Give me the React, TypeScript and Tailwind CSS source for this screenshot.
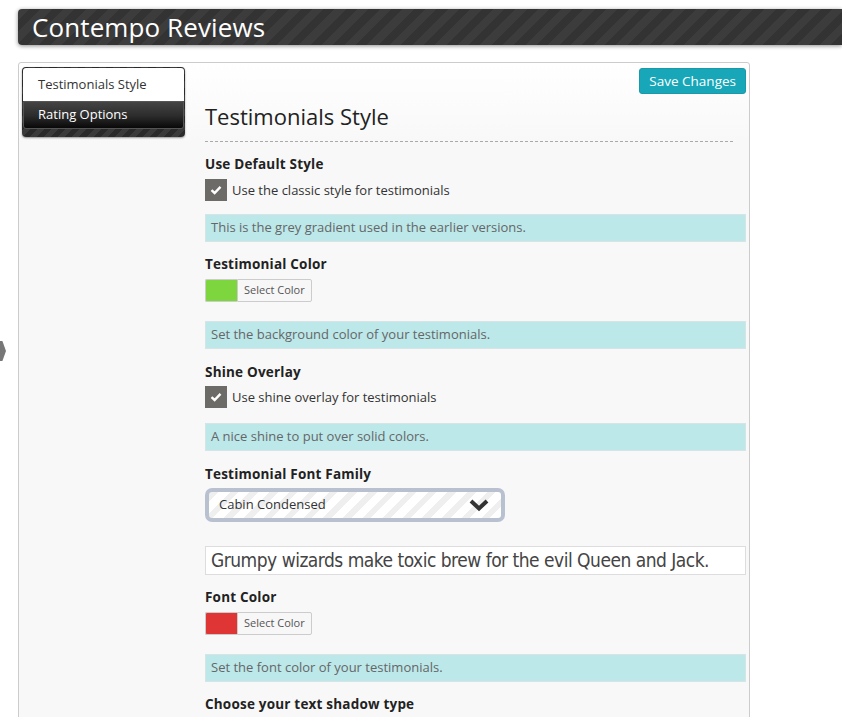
const stripes =
  "bg-[repeating-linear-gradient(-45deg,#333_0px,#333_8px,#3c3c3c_8px,#3c3c3c_16px)]";

function Checkbox({ label, className = "" }: { label: string; className?: string }) {
  return (
    <div className={"flex items-center gap-[5px] " + className}>
      <span className="w-[22px] h-[22px] bg-[#6d6b68] flex items-center justify-center">
        <svg width="12" height="10" viewBox="0 0 12 10">
          <path d="M1.5 5.2 L4.6 8 L10.5 1.8" fill="none" stroke="#fff" strokeWidth="2.4" />
        </svg>
      </span>
      <span className="text-[13px] text-[#333] leading-[20px]">{label}</span>
    </div>
  );
}

function Info({ text, className = "" }: { text: string; className?: string }) {
  return (
    <div
      className={
        "h-[28px] bg-[#bce8ea] border border-[#d6e4e5] px-[5px] flex items-center text-[13px] text-[#666] " +
        className
      }
    >
      {text}
    </div>
  );
}

function Label({ text, className = "" }: { text: string; className?: string }) {
  return (
    <div className={"text-[13.5px] leading-[20px] font-bold text-[#222] tracking-[0.2px] " + className}>{text}</div>
  );
}

function ColorPicker({ color, className = "" }: { color: string; className?: string }) {
  return (
    <div className={"flex h-[23px] " + className}>
      <span className={"w-[32px] border border-[#ccc] border-r-0 rounded-l-[2px] " + color} />
      <span className="px-[6px] border border-[#ccc] rounded-r-[2px] bg-[#f7f7f7] text-[11px] text-[#555] flex items-center">
        Select Color
      </span>
    </div>
  );
}

export default function App() {
  return (
    <div className="h-[717px] bg-white font-['Open_Sans',sans-serif] relative overflow-hidden">
      {/* side handle */}
      <div className="absolute left-0 top-[341px] w-[6px] h-[20px] bg-[#777] [clip-path:polygon(0_0,40%_0,100%_50%,40%_100%,0_100%)]" />

      <div className="pt-[9px] pl-[18px]">
        <div
          className={
            "h-[36px] rounded-l-[4px] flex items-center pl-[14px] shadow-[0_1px_4px_rgba(0,0,0,0.45)] " + stripes
          }
        >
          <span className="text-white text-[26px] tracking-[0.1px]">Contempo Reviews</span>
        </div>
      </div>

      <div className="ml-[18px] mt-[17px] w-[732px] border border-[#ccc] rounded-t-[3px] bg-[linear-gradient(#fff,#f8f8f8_80px)] flex pb-[20px]">
        {/* nav */}
        <div className="w-[169px] pt-[4px] pl-[3px] shrink-0">
          <div className="w-[163px] rounded-[4px] p-[1px] pb-[8px] bg-[repeating-linear-gradient(-45deg,#2a2a2a_0px,#2a2a2a_5px,#3a3a3a_5px,#3a3a3a_10px)] shadow-[0_1px_2px_rgba(0,0,0,0.4)]">
            <div className="h-[33px] bg-white rounded-t-[3px] flex items-center pl-[15px] text-[13px] text-[#333]">
              Testimonials Style
            </div>
            <div className="h-[28px] bg-[linear-gradient(#444,#2b2b2b_55%,#080808)] border border-[#555] rounded-b-[3px] flex items-center pl-[14px] text-[13px] text-white">
              Rating Options
            </div>
          </div>
        </div>

        {/* content */}
        <div className="flex-1 min-w-0 pr-[3px]">
          <div className="flex justify-end pt-[5px]">
            <button className="h-[26px] px-[9px] bg-[#17a7b8] rounded-[3px] text-white text-[13.5px] border border-[#1a9aa8]">
              Save Changes
            </button>
          </div>
          <div className="pl-[17px]">
            <h1 className="text-[22px] text-[#222] mt-[8px] leading-[28px]">Testimonials Style</h1>
            <div className="mt-[11px] mr-[13px] border-t border-dashed border-[#aaa]" />

            <Label text="Use Default Style" className="mt-[12px]" />
            <Checkbox label="Use the classic style for testimonials" className="mt-[5px]" />
            <Info text="This is the grey gradient used in the earlier versions." className="mt-[13px]" />

            <Label text="Testimonial Color" className="mt-[12px]" />
            <ColorPicker color="bg-[#7ed63f]" className="mt-[5px]" />
            <Info text="Set the background color of your testimonials." className="mt-[19px]" />

            <Label text="Shine Overlay" className="mt-[13px]" />
            <Checkbox label="Use shine overlay for testimonials" className="mt-[4px]" />
            <Info text="A nice shine to put over solid colors." className="mt-[15px]" />

            <Label text="Testimonial Font Family" className="mt-[13px]" />
            <div className="mt-[4px] w-[300px] h-[34px] rounded-[7px] border-[4px] border-[#b9c1d1] bg-[repeating-linear-gradient(-45deg,#fff_0px,#fff_8px,#efefef_8px,#efefef_14px)] flex items-center justify-between pl-[10px] pr-[12px]">
              <span className="text-[13px] text-[#333]">Cabin Condensed</span>
              <svg width="20" height="14" viewBox="0 0 20 14">
                <path d="M2 3 L10 10.5 L18 3" fill="none" stroke="#333" strokeWidth="4" />
              </svg>
            </div>

            <div className="mt-[24px] h-[29px] bg-white border border-[#ddd] flex items-center pl-[5px] whitespace-nowrap overflow-hidden text-[19px] text-[#444] font-['DejaVu_Sans_Condensed',sans-serif] [font-stretch:condensed] tracking-[-0.5px]">
              Grumpy wizards make toxic brew for the evil Queen and Jack.
            </div>

            <Label text="Font Color" className="mt-[12px]" />
            <ColorPicker color="bg-[#e03535]" className="mt-[5px]" />
            <Info text="Set the font color of your testimonials." className="mt-[19px]" />

            <Label text="Choose your text shadow type" className="mt-[12px]" />
          </div>
        </div>
      </div>
    </div>
  );
}
